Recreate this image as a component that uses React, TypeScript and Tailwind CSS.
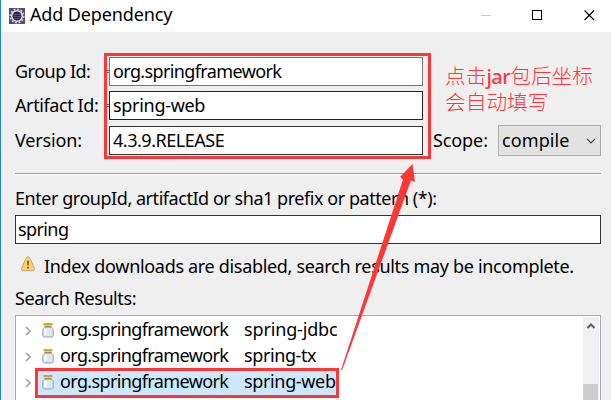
import type { ReactNode } from "react";

function Field({ value, className }: { value: string; className: string }) {
  return (
    <div className={`flex h-[29px] w-[314px] shrink-0 items-center border bg-white pl-[3px] ${className}`}>
      <span>{value}</span>
    </div>
  );
}

function AppIcon() {
  return (
    <svg width="16" height="16" viewBox="0 0 16 16" className="shrink-0">
      <rect width="16" height="16" fill="#594777" />
      <circle cx="8" cy="8" r="6.7" fill="none" stroke="#d0ccd6" strokeWidth="1.8" strokeDasharray="1.8 1.7" />
      <circle cx="8" cy="8" r="5.3" fill="#29233f" stroke="#dedbe0" strokeWidth="1.6" />
      <path d="M4 6.500h8M3.500 8.500h9M4.500 10.500h7" stroke="#5a5177" strokeWidth=".9" />
    </svg>
  );
}

function WarningIcon() {
  return (
    <svg width="14" height="16" viewBox="0 0 14 16" className="-mt-[3px] shrink-0">
      <path
        d="M7 .8C5.6.8 5.1 2 4.4 3.7L1 11.2C.1 13.4.5 14.7 2.3 14.7h9.4c1.8 0 2.2-1.3 1.3-3.500L9.6 3.7C8.9 2 8.4.8 7 .8Z"
        fill="#fbd071"
        stroke="#cfa068"
      />
      <path d="M6.100 4.800h1.800l-.3 4.700H6.400Z" fill="#6b4a22" />
      <rect x="6.200" y="10.800" width="1.600" height="1.700" fill="#6b4a22" />
    </svg>
  );
}

function JarIcon() {
  return (
    <svg width="12" height="15" viewBox="0 0 12 15" className="shrink-0">
      <path
        d="M3 4C1.500 4.800.8 5.800.8 7v5c0 1.500.8 2 2 2h6.400c1.200 0 2-.5 2-2V7c0-1.200-.7-2.200-2.200-3Z"
        fill="#dce6f7"
        stroke="#8fa1bd"
      />
      <path d="M3.500 6v6" stroke="#fff" strokeWidth="2" />
      <path d="M2 2.300h8" stroke="#f6e4a4" strokeWidth="1.400" />
      <path d="M1.500 1h9M2.500 3.500h7" stroke="#b98d22" strokeWidth="1.300" />
    </svg>
  );
}

function ResultRow({ artifact, className, selected = false }: { artifact: string; className?: string; selected?: boolean }) {
  return (
    <div className="flex h-[26px] items-center pl-[9px]">
      <svg width="6" height="10" viewBox="0 0 6 10" className="mt-[2px] mr-[6px] shrink-0">
        <path d="M1 1l4 4-4 4" fill="none" stroke="#a3a3a3" strokeWidth="1.6" />
      </svg>
      <div className={`flex h-[25px] w-[300px] items-center pl-[5px] ${selected ? "bg-[#cce8ff]" : ""}`}>
        <JarIcon />
        <span className="-mt-[2px] ml-[6px] w-[184px] shrink-0 tracking-[-0.62px]">org.springframework</span>
        <span className={`-mt-[2px] ${className}`}>{artifact}</span>
      </div>
    </div>
  );
}

function FormRow({ label, children }: { label: ReactNode; children: ReactNode }) {
  return (
    <div className="flex h-[29px] shrink-0 items-center">
      <div className="flex w-[94px] shrink-0 items-center justify-between">{label}</div>
      {children}
    </div>
  );
}

function RequiredMark() {
  return (
    <svg width="6" height="5" viewBox="0 0 6 5" className="shrink-0">
      <path d="M1 1.500h5M1 3.500h5" stroke="#666" />
    </svg>
  );
}

export default function App() {
  return (
    <div className="relative flex h-[400px] w-[611px] flex-col overflow-hidden border-l border-[#1883d7] bg-[#efefef] font-['Noto_Sans','Noto_Sans_CJK_SC',sans-serif] text-[18px] leading-[24px] whitespace-nowrap text-black">
      <header className="flex h-8 shrink-0 items-center bg-white pl-2">
        <AppIcon />
        <h1 className="-mt-[4px] ml-[5px] tracking-[-0.13px]">Add Dependency</h1>
        <svg width="116" height="12" viewBox="0 0 116 12" className="-mt-[2px] mr-[14px] ml-auto">
          <path d="M0 6.500h10" stroke="#c7c7c7" />
          <rect x="51.500" y="1.500" width="9" height="9" fill="none" stroke="#000" />
          <path d="M103.500 1.500l9.500 9.500m0-9.500l-9.500 9.500" stroke="#000" strokeWidth="1.100" />
        </svg>
      </header>

      <main className="flex flex-1 flex-col pt-[25px] pr-[10px] pl-[14px]">
        <FormRow
          label={
            <>
              <span className="-mt-[2px] tracking-[-0.5px]">Group Id:</span>
              <RequiredMark />
            </>
          }
        >
          <Field value="org.springframework" className="border-[#777] pb-[2px] tracking-[-0.62px]" />
        </FormRow>
        <div className="h-[5px] shrink-0" />
        <FormRow
          label={
            <>
              <span className="-mt-[2px] tracking-[-0.4px]">Artifact Id:</span>
              <RequiredMark />
            </>
          }
        >
          <Field value="spring-web" className="border-[#222] pb-[2px] tracking-[-0.3px]" />
        </FormRow>
        <div className="h-[6px] shrink-0" />
        <FormRow label={<span className="-mt-[1px] tracking-[-0.15px]">Version:</span>}>
          <Field value="4.3.9.RELEASE" className="border-[#333] pb-[1px] tracking-[-0.48px]" />
          <span className="-mt-[1px] ml-[10px] w-[65px] shrink-0 tracking-[-0.1px]">Scope:</span>
          <div className="flex h-[31px] w-[103px] shrink-0 items-center justify-between border border-[#acacac] bg-[#e2e2e2] pr-[4px] pl-[3px]">
            <span className="-mt-[1px] tracking-[0.1px]">compile</span>
            <svg width="10" height="6" viewBox="0 0 10 6">
              <path d="M1 .8l4 4 4-4" fill="none" stroke="#444" strokeWidth="1.200" />
            </svg>
          </div>
        </FormRow>
        <div className="mt-[18px] h-[2px] shrink-0 border-t border-[#a0a0a0] bg-white" />
        <p className="mt-[11px] h-[24px] tracking-[-0.455px]">Enter groupId, artifactId or sha1 prefix or pattern (*):</p>
        <div className="mt-[5px] flex h-[29px] shrink-0 items-center border border-[#333] bg-white pb-[1px] pl-[2px] tracking-[-0.6px]">
          spring
        </div>
        <div className="mt-[9px] flex h-[24px] items-center pl-[6px]">
          <WarningIcon />
          <span className="mt-[1px] ml-[9px] tracking-[-0.32px]">
            Index downloads are disabled, search results may be incomplete.
          </span>
        </div>
        <p className="mt-[9px] h-[24px] tracking-[-0.42px]">Search Results:</p>
        <section className="mt-[5px] flex h-[86px] shrink-0 justify-between border border-b-0 border-[#a9abb3] bg-white">
          <div className="pt-[1px]">
            <ResultRow artifact="spring-jdbc" className="tracking-[-0.15px]" />
            <ResultRow artifact="spring-tx" className="tracking-[-0.4px]" />
            <ResultRow artifact="spring-web" className="tracking-[-0.35px]" selected />
          </div>
          <div className="mt-[1px] mr-[1px] flex w-[16px] flex-col items-center bg-[#f0f0f0] pt-[6px]">
            <svg width="8" height="6" viewBox="0 0 8 6" className="shrink-0">
              <path d="M.5 5l3.500-3.500L7.500 5" fill="none" stroke="#606060" strokeWidth="2" />
            </svg>
            <div className="mt-[55px] mr-[1px] h-[20px] w-[15px] shrink-0 bg-[#cdcdcd]" />
          </div>
        </section>
      </main>

      <div className="absolute top-[53px] left-[103px] h-[106px] w-[327px] border-3 border-[#fb3737]" />
      <div className="absolute top-[368px] left-[34px] h-[30px] w-[304px] border-3 border-[#fb3737]" />
      <svg className="absolute top-0 left-0" width="610" height="400" viewBox="1 0 610 400">
        <path d="M341 370L403 179.500L400 177L412.500 164L415 182L411 180.500L342.200 370Z" fill="#fb3737" />
      </svg>
      <div className="absolute top-[62px] left-[444px] font-['Noto_Sans_CJK_SC',sans-serif] text-[20.700px] leading-[26px] font-light text-[#fb3737]">
        <div>
          点击<span className="font-['Noto_Sans',sans-serif] text-[20px] leading-none font-medium tracking-[-0.5px]">jar</span>包后坐标
        </div>
        <div>会自动填写</div>
      </div>
    </div>
  );
}
